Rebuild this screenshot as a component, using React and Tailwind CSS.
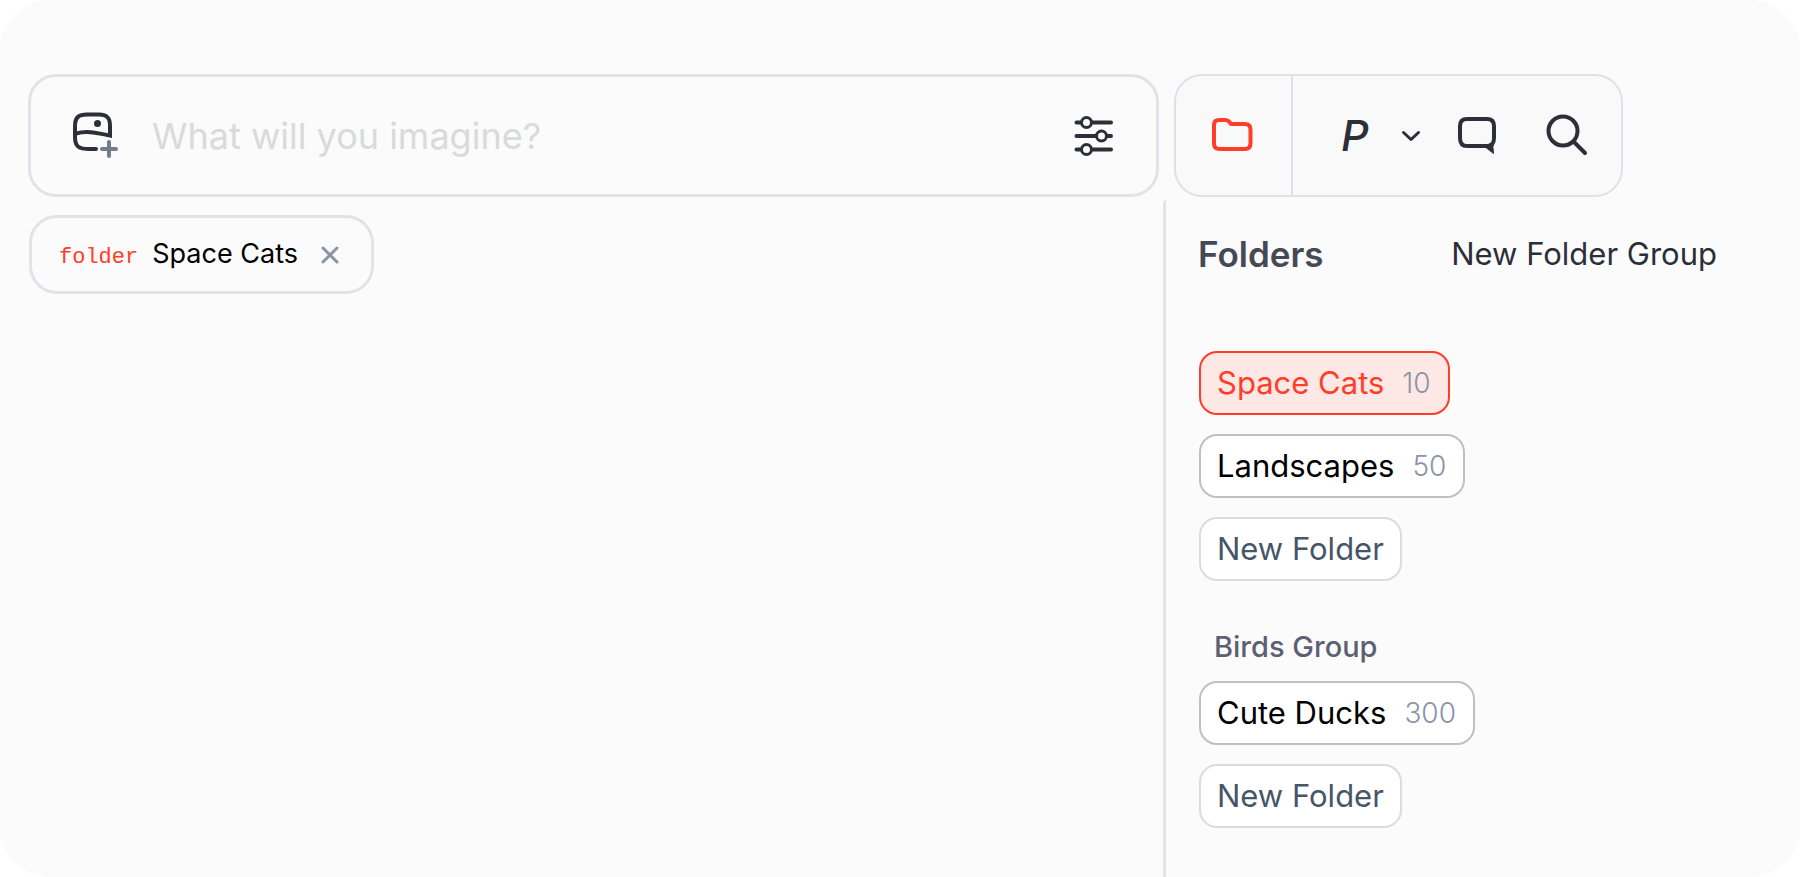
import React from 'react';

const groups = [
  {
    name: '',
    folders: [
      { name: 'Space Cats', count: 10, active: true },
      { name: 'Landscapes', count: 50 },
    ],
  },
  {
    name: 'Birds Group',
    folders: [{ name: 'Cute Ducks', count: 300 }],
  },
];

function AddImageIcon() {
  return (
    <svg width="48" height="50" viewBox="0 0 48 50" fill="none" strokeLinecap="round" aria-hidden="true">
      <path
        d="M26 38H19.500C9 38 5 36 5 26V15C5 6 9 3.500 17 3.500H29C37 3.500 40 7 40 14.500V24.500C29 22.500 18 19 6 22.500"
        stroke="#2c2f38"
        strokeWidth="4"
      />
      <circle cx="27.500" cy="12.500" r="3.500" fill="#2c2f38" />
      <path d="M32 38H46M39 31V45" stroke="#767c8f" strokeWidth="4" />
    </svg>
  );
}

function SlidersIcon() {
  return (
    <svg width="40" height="42" viewBox="0 0 40 42" fill="none" stroke="#2c2f38" strokeLinecap="round" aria-hidden="true">
      <path d="M2.500 7.500H7M18 7.500H37M2.500 21H22M33 21H37M2.500 34.500H7M18 34.500H37" strokeWidth="4" />
      <g strokeWidth="3">
        <circle cx="12.500" cy="7.500" r="5" />
        <circle cx="27.500" cy="21" r="5" />
        <circle cx="12.500" cy="34.500" r="5" />
      </g>
    </svg>
  );
}

function FolderIcon() {
  return (
    <svg width="42" height="38" viewBox="0 0 42 38" fill="none" stroke="#ff3d29" strokeWidth="4" strokeLinejoin="round" aria-hidden="true">
      <path d="M3 8Q3 3 8 3H14.500Q17 3 18.500 5L20 7H34Q39.500 7 39.500 12.500V26Q39.500 32 34 32H8.500Q3 32 3 26.500Z" />
    </svg>
  );
}

function ChatIcon() {
  return (
    <svg width="40" height="42" viewBox="0 0 40 42" fill="none" aria-hidden="true">
      <path
        d="M10 4H30Q37 4 37 11V23Q37 31 30 31H10Q3 31 3 23V11Q3 4 10 4Z"
        stroke="#2c2f38"
        strokeWidth="4"
      />
      <path d="M27 31L36.500 38.500L35.500 28Z" fill="#2c2f38" stroke="#2c2f38" strokeLinejoin="round" />
    </svg>
  );
}

function SearchIcon() {
  return (
    <svg width="44" height="46" viewBox="0 0 44 46" fill="none" stroke="#2c2f38" strokeWidth="4" strokeLinecap="round" aria-hidden="true">
      <circle cx="18" cy="18" r="14.500" />
      <path d="M28.500 28.500L40 40" />
    </svg>
  );
}

function FolderChip({ folder }) {
  return (
    <button
      type="button"
      className={
        folder.active
          ? 'flex h-16 items-center gap-[18px] rounded-[18px] border-2 border-[#ff3d29] bg-[#fde8e5] px-4 text-[31px] text-[#ff3d29]'
          : 'flex h-16 items-center gap-[18px] rounded-[18px] border-2 border-[#c0c0c0] bg-white px-4 text-[31px] text-black'
      }
    >
      {folder.name}
      <span className="pr-px text-[28px] font-light text-[#8c93a8]">{folder.count}</span>
    </button>
  );
}

export default function App() {
  return (
    <div className="min-h-screen bg-white">
      <div className="flex min-h-screen flex-col rounded-[50px] bg-[#fbfbfb] pt-[74px] font-['Inter',sans-serif]">
        <header className="flex gap-[15px] pl-7">
          <form className="flex h-[123px] w-[1131px] items-center rounded-[28px] border-3 border-[#e2e2e8] pr-[42px] pl-[39px]">
            <button type="button" aria-label="Add image">
              <AddImageIcon />
            </button>
            <input
              type="text"
              aria-label="Prompt"
              placeholder="What will you imagine?"
              className="ml-[34px] h-16 min-w-0 flex-1 bg-transparent text-[36px] outline-none placeholder:text-[#d9dada]"
            />
            <button type="button" aria-label="Settings">
              <SlidersIcon />
            </button>
          </form>

          <nav className="flex h-[123px] items-center rounded-[28px] border-2 border-[#e0e0e6] bg-[#f9f9f9]">
            <button type="button" aria-label="Folders" className="flex h-full w-[117px] items-center justify-center border-r-2 border-[#e0e0e6] pr-1">
              <FolderIcon />
            </button>
            <button type="button" aria-label="Profile" className="ml-12 flex items-center gap-8">
              <span className="text-[43px] font-medium text-[#2c2f38] italic">P</span>
              <svg width="20" height="14" viewBox="0 0 20 14" fill="none" stroke="#2c2f38" strokeWidth="3" strokeLinecap="round" strokeLinejoin="round" aria-hidden="true">
                <path d="M2.500 3.500L10 10.500L17.500 3.500" />
              </svg>
            </button>
            <button type="button" aria-label="Messages" className="ml-9">
              <ChatIcon />
            </button>
            <button type="button" aria-label="Search" className="mr-8 ml-12">
              <SearchIcon />
            </button>
          </nav>
        </header>

        <div className="mt-[3px] flex flex-1">
          <main className="w-[1163px] pt-[15px] pl-[29px]">
            <div className="flex h-[79px] w-fit items-center rounded-[28px] border-3 border-[#e2e2e8] px-[27px]">
              <div className="flex items-baseline gap-[14px]">
                <span className="font-['Liberation_Mono',monospace] text-[22px] text-[#ff3d29]">folder</span>
                <span className="text-[27px] text-black">Space Cats</span>
              </div>
              <button type="button" aria-label="Remove filter" className="mr-1 ml-[22px]">
                <svg width="20" height="20" viewBox="0 0 20 20" fill="none" stroke="#8c93a8" strokeWidth="3" strokeLinecap="round" aria-hidden="true">
                  <path d="M3 3L17 17M17 3L3 17" />
                </svg>
              </button>
            </div>
          </main>

          <aside className="flex-1 rounded-t-sm border-l-3 border-[#e2e2e8] pl-8">
            <div className="mt-[30px] flex h-12 items-center justify-between pr-[83px]">
              <h2 className="text-[35px] font-semibold text-[#444955]">Folders</h2>
              <button type="button" className="text-[31px] text-[#2c2f38]">
                New Folder Group
              </button>
            </div>
            <div className="mt-[73px] pl-px">
              {groups.map((group) => (
                <section key={group.name} className="mb-12 flex flex-col items-start gap-[19px]">
                  {group.name && <h3 className="-mt-0.5 -mb-[5px] pl-[15px] text-[29px] leading-10 font-medium text-[#5b6072]">{group.name}</h3>}
                  {group.folders.map((folder) => (
                    <FolderChip key={folder.name} folder={folder} />
                  ))}
                  <button type="button" className="h-16 rounded-[18px] border-2 border-[#dcdcdc] bg-white px-4 text-[31px] text-[#475569]">
                    New Folder
                  </button>
                </section>
              ))}
            </div>
          </aside>
        </div>
      </div>
    </div>
  );
}
